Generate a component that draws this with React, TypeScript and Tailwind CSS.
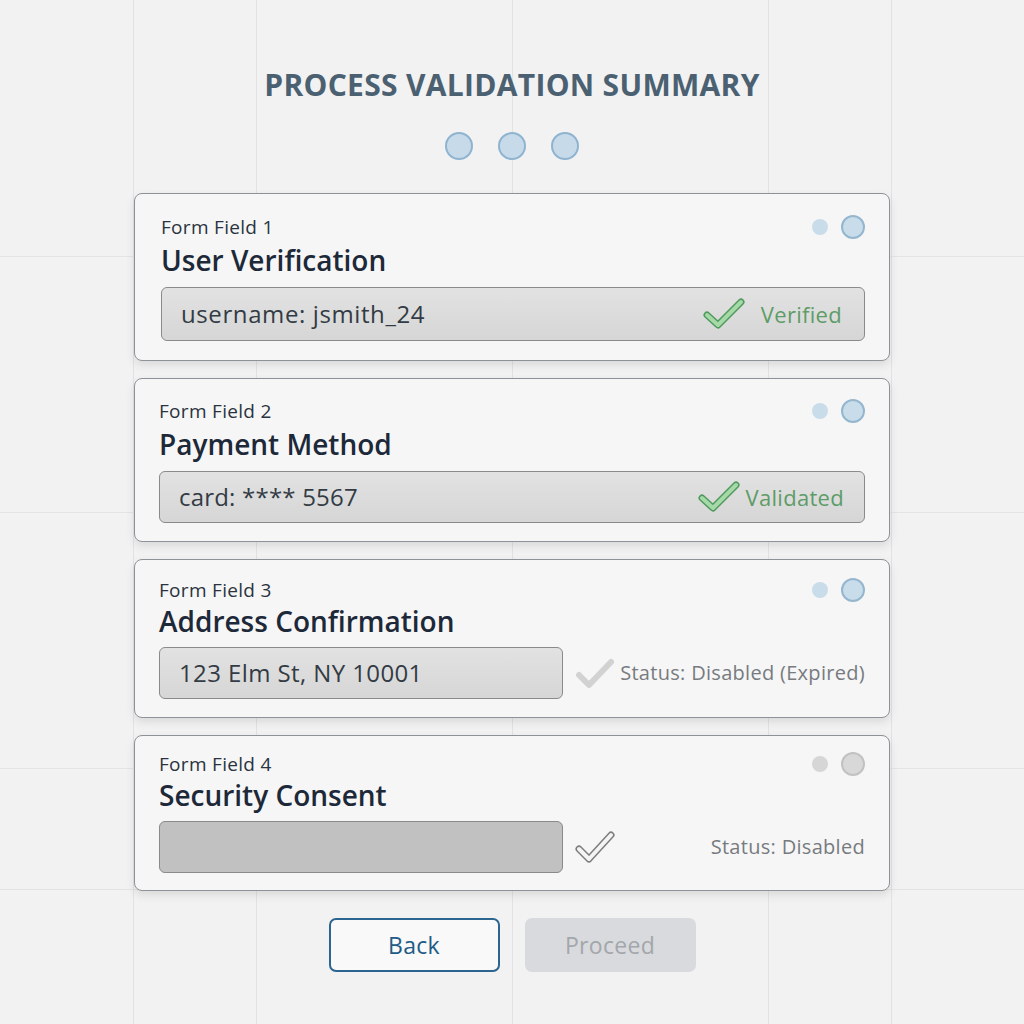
import React from "react";

function GreenCheck() {
  return (
    <svg width="42" height="32" viewBox="0 0 42 32" className="shrink-0">
      <polyline points="4,17 15,27 38,4" fill="none" stroke="#4f9a5c" strokeWidth="7" strokeLinecap="round" strokeLinejoin="round" />
      <polyline points="4,17 15,27 38,4" fill="none" stroke="#a6d9a8" strokeWidth="4" strokeLinecap="round" strokeLinejoin="round" />
    </svg>
  );
}

function GrayCheck() {
  return (
    <svg width="40" height="32" viewBox="0 0 40 32" className="shrink-0">
      <polyline points="4,18 14,28 36,5" fill="none" stroke="#d2d2d2" strokeWidth="6" strokeLinecap="round" strokeLinejoin="round" />
    </svg>
  );
}

function OutlineCheck() {
  return (
    <svg width="40" height="34" viewBox="0 0 40 34" className="shrink-0">
      <polyline points="4,19 14,29 36,5" fill="none" stroke="#7d7d7d" strokeWidth="7" strokeLinecap="round" strokeLinejoin="round" />
      <polyline points="4,19 14,29 36,5" fill="none" stroke="#f4f4f4" strokeWidth="4" strokeLinecap="round" strokeLinejoin="round" />
    </svg>
  );
}

function Dots({ gray }: { gray?: boolean }) {
  return (
    <div className="flex items-center gap-[13px]">
      <span className={gray ? "block w-[16px] h-[16px] rounded-full bg-[#d6d6d6]" : "block w-[16px] h-[16px] rounded-full bg-[#c9dcea]"} />
      <span className={gray ? "block w-[24px] h-[24px] rounded-full bg-[#d8d8d8] border-2 border-[#c2c2c2]" : "block w-[24px] h-[24px] rounded-full bg-[#c9dcea] border-2 border-[#94b6cf]"} />
    </div>
  );
}

const font = { fontFamily: '"Open Sans", "Noto Sans", sans-serif' };

export default function App() {
  const vLines = [133, 256, 512, 768, 891];
  const hLines = [256, 512, 768, 889];
  return (
    <div className="relative min-h-[1024px] w-full overflow-hidden bg-[#f2f2f2]" style={font}>
      {/* background grid */}
      <div className="pointer-events-none absolute inset-0">
        {vLines.map((x) => (
          <div key={"v" + x} className="absolute top-0 bottom-0 w-px bg-[#e2e2e2]" style={{ left: x }} />
        ))}
        {hLines.map((y) => (
          <div key={"h" + y} className="absolute left-0 right-0 h-px bg-[#e4e4e4]" style={{ top: y }} />
        ))}
      </div>

      <div className="relative flex flex-col items-center pt-[66px]">
        <h1 className="text-[30px] leading-[38px] font-bold text-[#4b6172] tracking-[0.3px]">PROCESS VALIDATION SUMMARY</h1>
        <div className="mt-[28px] flex items-center gap-[25px]">
          <span className="block w-[28px] h-[28px] rounded-full bg-[#c6dae9] border-2 border-[#8fb4d0]" />
          <span className="block w-[28px] h-[28px] rounded-full bg-[#c6dae9] border-2 border-[#8fb4d0]" />
          <span className="block w-[28px] h-[28px] rounded-full bg-[#c6dae9] border-2 border-[#8fb4d0]" />
        </div>

        <div className="mt-[33px] flex w-[756px] flex-col gap-[17px]">
          {/* Card 1 */}
          <div className="rounded-[8px] border border-[#8d9298] bg-[#f6f6f6] pl-[26px] pr-6 pt-[22px] pb-[19px] shadow-[0_4px_10px_rgba(0,0,0,0.10)]">
            <div className="flex items-center justify-between h-[22px]">
              <span className="text-[19px] tracking-[0.3px] text-[#2a3340]">Form Field 1</span>
              <Dots />
            </div>
            <div className="mt-[6px] h-[32px] text-[28px] leading-[32px] font-semibold text-[#1d2939]">User Verification</div>
            <div className="mt-[11px] flex h-[54px] items-center justify-between rounded-[6px] border border-[#8a8a8a] bg-[linear-gradient(#e2e2e2,#d6d6d6)] pl-[19px] pr-[22px]">
              <span className="text-[24px] tracking-[0.6px] text-[#333b44]">username: jsmith_24</span>
              <div className="flex items-center gap-[16px]">
                <GreenCheck />
                <span className="text-[22px] tracking-[0.3px] text-[#5e9c68]">Verified</span>
              </div>
            </div>
          </div>

          {/* Card 2 */}
          <div className="rounded-[8px] border border-[#8d9298] bg-[#f6f6f6] px-6 pt-[21px] pb-[18px] shadow-[0_4px_10px_rgba(0,0,0,0.10)]">
            <div className="flex items-center justify-between h-[22px]">
              <span className="text-[19px] tracking-[0.3px] text-[#2a3340]">Form Field 2</span>
              <Dots />
            </div>
            <div className="mt-[6px] h-[32px] text-[28px] leading-[32px] font-semibold text-[#1d2939]">Payment Method</div>
            <div className="mt-[11px] flex h-[52px] items-center justify-between rounded-[6px] border border-[#8a8a8a] bg-[linear-gradient(#e2e2e2,#d6d6d6)] pl-[19px] pr-[20px]">
              <span className="text-[24px] tracking-[0.2px] text-[#333b44]">card: **** 5567</span>
              <div className="flex items-center gap-[6px]">
                <GreenCheck />
                <span className="text-[22px] tracking-[0.3px] text-[#5e9c68]">Validated</span>
              </div>
            </div>
          </div>

          {/* Card 3 */}
          <div className="rounded-[8px] border border-[#8d9298] bg-[#f6f6f6] px-6 pt-[19px] pb-[18px] shadow-[0_4px_10px_rgba(0,0,0,0.10)]">
            <div className="flex items-center justify-between h-[22px]">
              <span className="text-[19px] tracking-[0.3px] text-[#2a3340]">Form Field 3</span>
              <Dots />
            </div>
            <div className="mt-[4px] h-[32px] text-[28px] leading-[32px] font-semibold text-[#1d2939]">Address Confirmation</div>
            <div className="mt-[10px] flex items-center">
              <div className="flex h-[52px] w-[404px] items-center rounded-[6px] border border-[#8a8a8a] bg-[linear-gradient(#e2e2e2,#d6d6d6)] pl-[19px]">
                <span className="text-[24px] tracking-[0.4px] text-[#333b44]">123 Elm St, NY 10001</span>
              </div>
              <div className="ml-[12px]">
                <GrayCheck />
              </div>
              <span className="ml-auto text-[20px] tracking-[0.3px] text-[#777b80]">Status: Disabled (Expired)</span>
            </div>
          </div>

          {/* Card 4 */}
          <div className="rounded-[8px] border border-[#8d9298] bg-[#f6f6f6] px-6 pt-[17px] pb-[17px] shadow-[0_4px_10px_rgba(0,0,0,0.10)]">
            <div className="flex items-center justify-between h-[22px]">
              <span className="text-[19px] tracking-[0.3px] text-[#2a3340]">Form Field 4</span>
              <Dots gray />
            </div>
            <div className="mt-[4px] h-[32px] text-[28px] leading-[32px] font-semibold text-[#1d2939]">Security Consent</div>
            <div className="mt-[10px] flex items-center">
              <div className="h-[52px] w-[404px] rounded-[6px] border border-[#8a8a8a] bg-[#c1c1c1]" />
              <div className="ml-[12px]">
                <OutlineCheck />
              </div>
              <span className="ml-auto text-[20px] tracking-[0.3px] text-[#777b80]">Status: Disabled</span>
            </div>
          </div>
        </div>

        <div className="mt-[27px] flex items-center gap-[25px]">
          <button className="flex h-[54px] w-[171px] items-center justify-center rounded-[7px] border-2 border-[#2b6590] bg-[#f9f9f9] text-[23px] tracking-[0.3px] text-[#1f5b86]">Back</button>
          <button className="flex h-[54px] w-[171px] items-center justify-center rounded-[7px] bg-[#d8dadd] text-[23px] tracking-[0.3px] text-[#a3a7ab]">Proceed</button>
        </div>
      </div>
    </div>
  );
}
